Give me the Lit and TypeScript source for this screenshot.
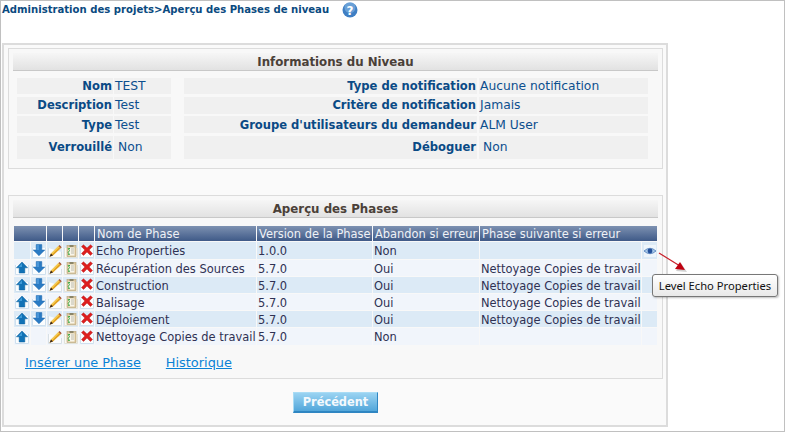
import { LitElement, html, css, svg } from "lit";
import { customElement } from "lit/decorators.js";

const upIcon = html`<svg class="ico" viewBox="0 0 14 14"><path d="M.5 4V13.5H13.5V4" fill="#fbfdfe" stroke="#cfe0ee"/><path d="M7 1L12.6 6.8H9.8V12H4.2V6.8H1.4Z" fill="#1172b6" stroke="#0a5e9e" stroke-width=".5"/><path d="M7 2.2L3.5 6H7Z" fill="#3f9bd8"/></svg>`;
const downIcon = html`<svg class="ico" viewBox="0 0 14 14"><path d="M.5 4V13.5H13.5V4" fill="#fbfdfe" stroke="#cfe0ee"/><path d="M4.2 .6H9.8V6H12.8L7 11.8L1.2 6H4.2Z" fill="#2a7bc4" stroke="#1c67ac" stroke-width=".5"/><path d="M4.6 1H7V6H4.6Z" fill="#4a96d8"/></svg>`;
const editIcon = html`<svg class="ico" viewBox="0 0 14 14"><path d="M.5 4V13.5H13.5V8" fill="#fbfcfd" stroke="#d8e0e6"/><path d="M1.5 12.8L3 9.5L10.5 2L12.8 4.3L5 11.6Z" fill="#e3a01e"/><path d="M3 9.5L10.5 2L11.4 2.9L4 10.4Z" fill="#f6cf5a"/><path d="M10.5 2L11.5 1L13.7 3.3L12.8 4.3Z" fill="#a9502a"/><path d="M1.5 12.8L3 9.5L5 11.6Z" fill="#3b2a1e"/></svg>`;
const copyIcon = html`<svg class="ico" viewBox="0 0 14 14"><path d="M.5 4V13.5H13.5V4" fill="#fdfaf2" stroke="#e2e2d8"/><rect x="3" y="1.5" width="9" height="11" fill="#dcc79c" stroke="#b5a075" stroke-width=".6"/><rect x="5.5" y="1" width="4" height="2" fill="#8a8468"/><rect x="4.5" y="3.5" width="6" height="8" fill="#f8f5ea"/><path d="M7 5H10M7 7H10M7 9H10" stroke="#a8a494" stroke-width=".7"/><path d="M6 4.5H4.2L5.5 6.5L4.2 8.5L5.5 10.5H4.2" fill="none" stroke="#3aaa44" stroke-width="1"/></svg>`;
const delIcon = html`<svg class="ico" viewBox="0 0 14 14"><path d="M.5 4V13.5H13.5V4" fill="#fbfdfe" stroke="#cfe0ee"/><path d="M1.5 2.5L3.5 .8L7 4L10.5 .8L12.5 2.5L9.2 6L12.5 9.5L10.5 11.4L7 8L3.5 11.4L1.5 9.5L4.8 6Z" fill="#dd1f1f" stroke="#b01515" stroke-width=".4"/></svg>`;
const eyeIcon = html`<svg class="ico" viewBox="0 0 14 14"><rect x="1" y="1" width="12" height="12" fill="#eef5fb"/><path d="M1 7Q7 1.5 13 7Q7 12.5 1 7Z" fill="#a8c8e8" stroke="#3d6fb0" stroke-width=".7"/><circle cx="7" cy="7" r="2.4" fill="#23509a"/></svg>`;

const phases = [
  { up: false, down: true, name: "Echo Properties", version: "1.0.0", abort: "Non", next: "", eye: true },
  { up: true, down: true, name: "Récupération des Sources", version: "5.7.0", abort: "Oui", next: "Nettoyage Copies de travail", eye: false },
  { up: true, down: true, name: "Construction", version: "5.7.0", abort: "Oui", next: "Nettoyage Copies de travail", eye: false },
  { up: true, down: true, name: "Balisage", version: "5.7.0", abort: "Oui", next: "Nettoyage Copies de travail", eye: false },
  { up: true, down: true, name: "Déploiement", version: "5.7.0", abort: "Oui", next: "Nettoyage Copies de travail", eye: false },
  { up: true, down: false, name: "Nettoyage Copies de travail", version: "5.7.0", abort: "Non", next: "", eye: false },
];

const info = [
  ["Nom", "TEST", "Type de notification", "Aucune notification"],
  ["Description", "Test", "Critère de notification", "Jamais"],
  ["Type", "Test", "Groupe d'utilisateurs du demandeur", "ALM User"],
  ["Verrouillé", "Non", "Déboguer", "Non"],
];

@customElement("app-root")
export class AppRoot extends LitElement {
  static styles = css`
    :host {
      display: block;
      position: relative;
      box-sizing: border-box;
      width: 785px;
      height: 432px;
      overflow: hidden;
      background: #fff;
      border: 1px solid #c0c0c0;
      font-family: "DejaVu Sans", Verdana, sans-serif;
      font-size: 11px;
    }
    .crumb {
      display: flex;
      align-items: center;
      height: 17px;
      padding-left: 1px;
      font-weight: bold;
      font-size: 10.1px;
      color: #0a4a80;
    }
    .help { margin-left: 13px; width: 16px; height: 16px; }
    .panel {
      box-sizing: border-box;
      margin: 25px 0 0 1px;
      width: 666px;
      height: 384px;
      padding: 3px 3px 0 4px;
      background: #fafafa;
      border: 2px solid #dcdcdc;
    }
    .box {
      box-sizing: border-box;
      border: 1px solid #dcdcdc;
      background: #f8f8f8;
      padding: 4px 4px 0;
    }
    .info { height: 121px; }
    .phases { height: 184px; margin-top: 26px; }
    .title {
      height: 17px;
      line-height: 19px;
      text-align: center;
      font-weight: bold;
      font-size: 11.8px;
      color: #4a4038;
      background: linear-gradient(#f6f6f6, #e2e2e2);
      border-bottom: 1px solid #c8c8c8;
    }
    .igrid {
      display: grid;
      grid-template-columns: 96px 57px 306px 169px;
      grid-template-rows: 16px 17px 17px 23px;
      column-gap: 1px;
      row-gap: 2.67px;
      margin: 7px 0 0 4px;
      font-size: 12.3px;
      color: #0d4f8e;
    }
    .igrid > div { background: #f0f0f0; display: flex; align-items: center; white-space: nowrap; }
    .lab { justify-content: flex-end; font-weight: bold; font-size: 11.55px; color: #0a4a85; padding-right: 1px; }
    .val { padding-left: 1px; }
    .sp { margin: 0 1px 0 12px; }
    .pad { padding-left: 4px !important; }
    .tbl {
      display: grid;
      grid-template-columns: 16px 15px 15px 15px 15px 161px 115px 106px 161px 15px;
      grid-template-rows: 15px 17px 16px 16px 16px 16px 17px;
      gap: 1px;
      margin: 8px 0 0 1px;
      color: #2f3153;
      font-size: 11.45px;
      white-space: nowrap;
    }
    .tbl > div { display: flex; align-items: center; }
    .h {
      background: linear-gradient(#7d91b1, #3f5a88);
      color: #eef1f6;
      padding-left: 2px;
    }
    .h.joined { margin-right: -1px; }
    .a { background: #dceaf6; }
    .b { background: #f1f5fb; }
    .c { justify-content: center; }
    .t { padding: 1px 0 0 1px; }
    .ico { width: 14px; height: 14px; display: block; }
    .links { display: flex; gap: 25px; margin: 10px 0 0 12px; font-size: 12.9px; }
    .links a { color: #0a82d6; text-decoration: underline; }
    .actions { display: flex; margin: 13px 0 0 285px; }
    .btn {
      box-sizing: border-box;
      width: 85px;
      height: 21px;
      line-height: 18px;
      text-align: center;
      font-weight: bold;
      font-size: 11.4px;
      color: #f4f9fd;
      background: linear-gradient(#9ad3f2, #52a6da);
      border: 1px solid #a9dcf5;
      border-right-color: #2f86c2;
      border-bottom: 2px solid #2f86c2;
    }
    .tip {
      position: absolute;
      left: 651px;
      top: 273px;
      width: 126px;
      height: 23px;
      box-sizing: border-box;
      border: 1px solid #777;
      border-radius: 3px;
      background: linear-gradient(#fff, #e9e9e9);
      box-shadow: 1px 1px 2px rgba(0, 0, 0, .25);
      font-family: "Noto Sans", "Open Sans", sans-serif;
      font-size: 11.2px;
      line-height: 21px;
      text-align: center;
      color: #111;
      white-space: nowrap;
    }
    .arrow { position: absolute; left: 655px; top: 250px; overflow: visible; }
  `;

  render() {
    return html`
      <div class="crumb">
        Administration des projets&gt;Aperçu des Phases de niveau
        <svg class="help" viewBox="0 0 16 16">
          <circle cx="8" cy="8" r="7.5" fill="#3f7fc4" />
          <circle cx="8" cy="5.5" r="5.5" fill="#8dbbe8" opacity=".55" />
          <text x="8" y="12.5" text-anchor="middle" font-size="12" font-weight="bold" fill="#fff" font-family="DejaVu Sans">?</text>
        </svg>
      </div>
      <div class="panel">
        <div class="box info">
          <div class="title">Informations du Niveau</div>
          <div class="igrid">
            ${info.map(
              (r, i) => html`
                <div class="lab">${r[0]}</div>
                <div class="val ${i == 3 ? "pad" : ""}">${r[1]}</div>
                <div class="lab sp">${r[2]}</div>
                <div class="val ${i == 3 ? "pad" : ""}">${r[3]}</div>
              `
            )}
          </div>
        </div>
        <div class="box phases">
          <div class="title">Aperçu des Phases</div>
          <div class="tbl">
            <div class="h joined"></div><div class="h"></div><div class="h"></div><div class="h"></div><div class="h"></div>
            <div class="h">Nom de Phase</div>
            <div class="h">Version de la Phase</div>
            <div class="h">Abandon si erreur</div>
            <div class="h joined">Phase suivante si erreur</div>
            <div class="h"></div>
            ${phases.map((p, i) => {
              const k = i % 2 == 0 ? "a" : "b";
              return html`
                <div class="${k} c">${p.up ? upIcon : ""}</div>
                <div class="${k} c">${p.down ? downIcon : ""}</div>
                <div class="${k} c">${editIcon}</div>
                <div class="${k} c">${copyIcon}</div>
                <div class="${k} c">${delIcon}</div>
                <div class="${k} t">${p.name}</div>
                <div class="${k} t">${p.version}</div>
                <div class="${k} t">${p.abort}</div>
                <div class="${k} t">${p.next}</div>
                <div class="${k} c">${p.eye ? eyeIcon : ""}</div>
              `;
            })}
          </div>
          <div class="links"><a>Insérer une Phase</a><a>Historique</a></div>
        </div>
        <div class="actions"><div class="btn">Précédent</div></div>
      </div>
      <svg class="arrow" width="34" height="24" viewBox="0 0 34 24">
        ${svg`<path d="M3 2L24 15" stroke="#c8202a" stroke-width="1.2"/><path d="M20 20L31 21L25 12Z" fill="#000" opacity=".18"/><path d="M24 11L29 19L19 18Z" fill="#c00010"/>`}
      </svg>
      <div class="tip">Level Echo Properties</div>
    `;
  }
}
